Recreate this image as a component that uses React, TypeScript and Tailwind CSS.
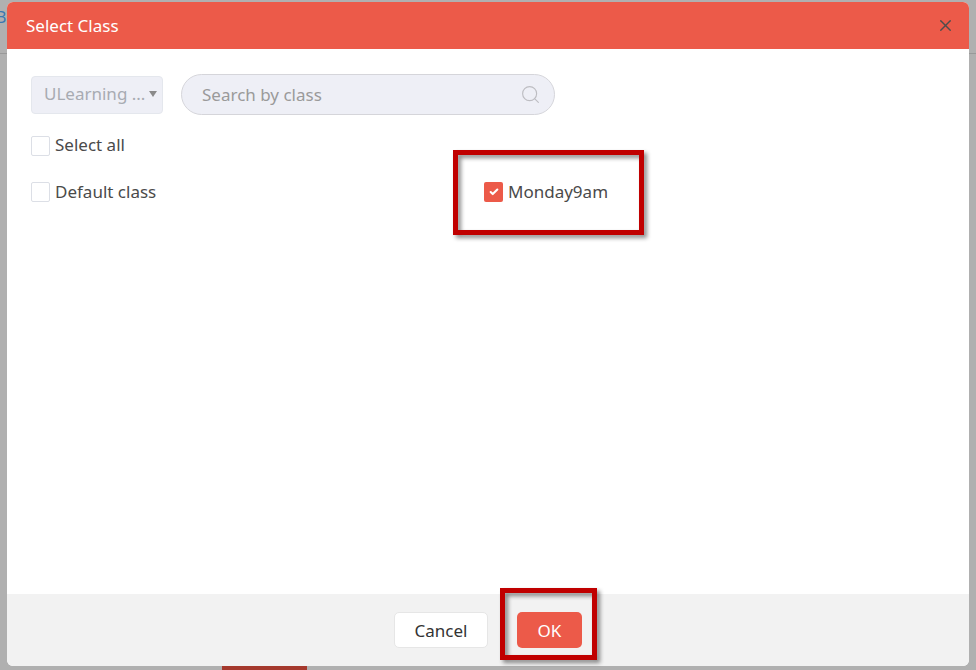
import { Search, X, Check } from "lucide-react";

const font = "font-['Noto_Sans','Open_Sans',sans-serif]";

function Box() {
  return <span className="h-[20px] w-[19px] shrink-0 rounded-[2px] border border-[#dcdfe6] bg-white" />;
}

export default function App() {
  return (
    <div className={`relative h-[670px] w-[976px] overflow-hidden bg-[#b0b0b0] ${font}`}>
      <span className="absolute left-[-4px] top-[6px] text-[16px] leading-[22px] text-[#3a78b0]">B</span>
      <div className="absolute left-0 right-0 top-[53px] h-px bg-[#999]" />
      <div className="absolute left-[222px] top-[666px] h-[4px] w-[85px] bg-[#a5392d]" />

      <div className="absolute left-[7px] top-[2px] flex h-[664px] w-[962px] flex-col overflow-hidden rounded-[6px] bg-white">
        <header className="flex h-[47px] shrink-0 items-center justify-between bg-[#ec5a49] pl-[19px] pr-[14px]">
          <h1 className="text-[17px] font-normal text-white">Select Class</h1>
          <X size={19} strokeWidth={1.7} className="text-[#4d4d4d]" />
        </header>

        <main className="flex-1 px-[24px] pt-[25px]">
          <div className="flex items-center gap-[18px]">
            <div className="flex h-[38px] w-[132px] items-center justify-between rounded-[4px] border border-[#e4e7ed] bg-[#eeeff6] pl-[12px] pr-[5px]">
              <span className="mb-[1px] whitespace-nowrap text-[17px] text-[#a8abb2]">ULearning ...</span>
              <span className="mb-[2px] h-0 w-0 border-x-[4px] border-t-[6px] border-x-transparent border-t-[#8a8a8a]" />
            </div>
            <div className="flex h-[41px] w-[374px] items-center justify-between rounded-full border border-[#d5d5da] bg-[#eeeff6] pl-[20px] pr-[13px]">
              <span className="text-[17px] text-[#9a9a9a]">Search by class</span>
              <Search size={21} strokeWidth={1.3} className="text-[#bdbdc2]" />
            </div>
          </div>

          <label className="mt-[18px] flex items-center gap-[5px] text-[17px] leading-[24px] text-[#4a4a4a]">
            <span className="mt-[1px] h-[20px] w-[19px] shrink-0 rounded-[2px] border border-[#dcdfe6] bg-white" />
            Select all
          </label>

          <div className="mt-[23px] flex">
            <label className="flex w-[453px] items-center gap-[5px] text-[17px] leading-[24px] text-[#4a4a4a]">
              <Box />
              Default class
            </label>
            <label className="flex items-center gap-[5px] text-[17px] leading-[24px] text-[#4a4a4a]">
              <span className="flex h-[20px] w-[19px] items-center justify-center rounded-[2px] bg-[#ec5a49]">
                <Check size={10} strokeWidth={5} className="text-white" />
              </span>
              Monday9am
            </label>
          </div>
        </main>

        <footer className="flex h-[72px] shrink-0 items-center justify-center gap-[29px] bg-[#f2f2f2]">
          <button className="h-[36px] w-[94px] rounded-[5px] border border-[#e6e6e6] bg-white pt-[2px] text-[17px] text-[#333]">Cancel</button>
          <button className="h-[36px] w-[65px] rounded-[5px] bg-[#ec5a49] pt-[2px] text-[17px] text-white">OK</button>
        </footer>
      </div>

      <div className="absolute left-[453px] top-[150px] h-[85px] w-[191px] border-[5px] border-[#c00000] drop-shadow-[3px_3px_2px_rgba(0,0,0,0.45)]" />
      <div className="absolute left-[500px] top-[588px] h-[72px] w-[97px] border-[5px] border-[#c00000] drop-shadow-[3px_3px_2px_rgba(0,0,0,0.45)]" />
    </div>
  );
}
